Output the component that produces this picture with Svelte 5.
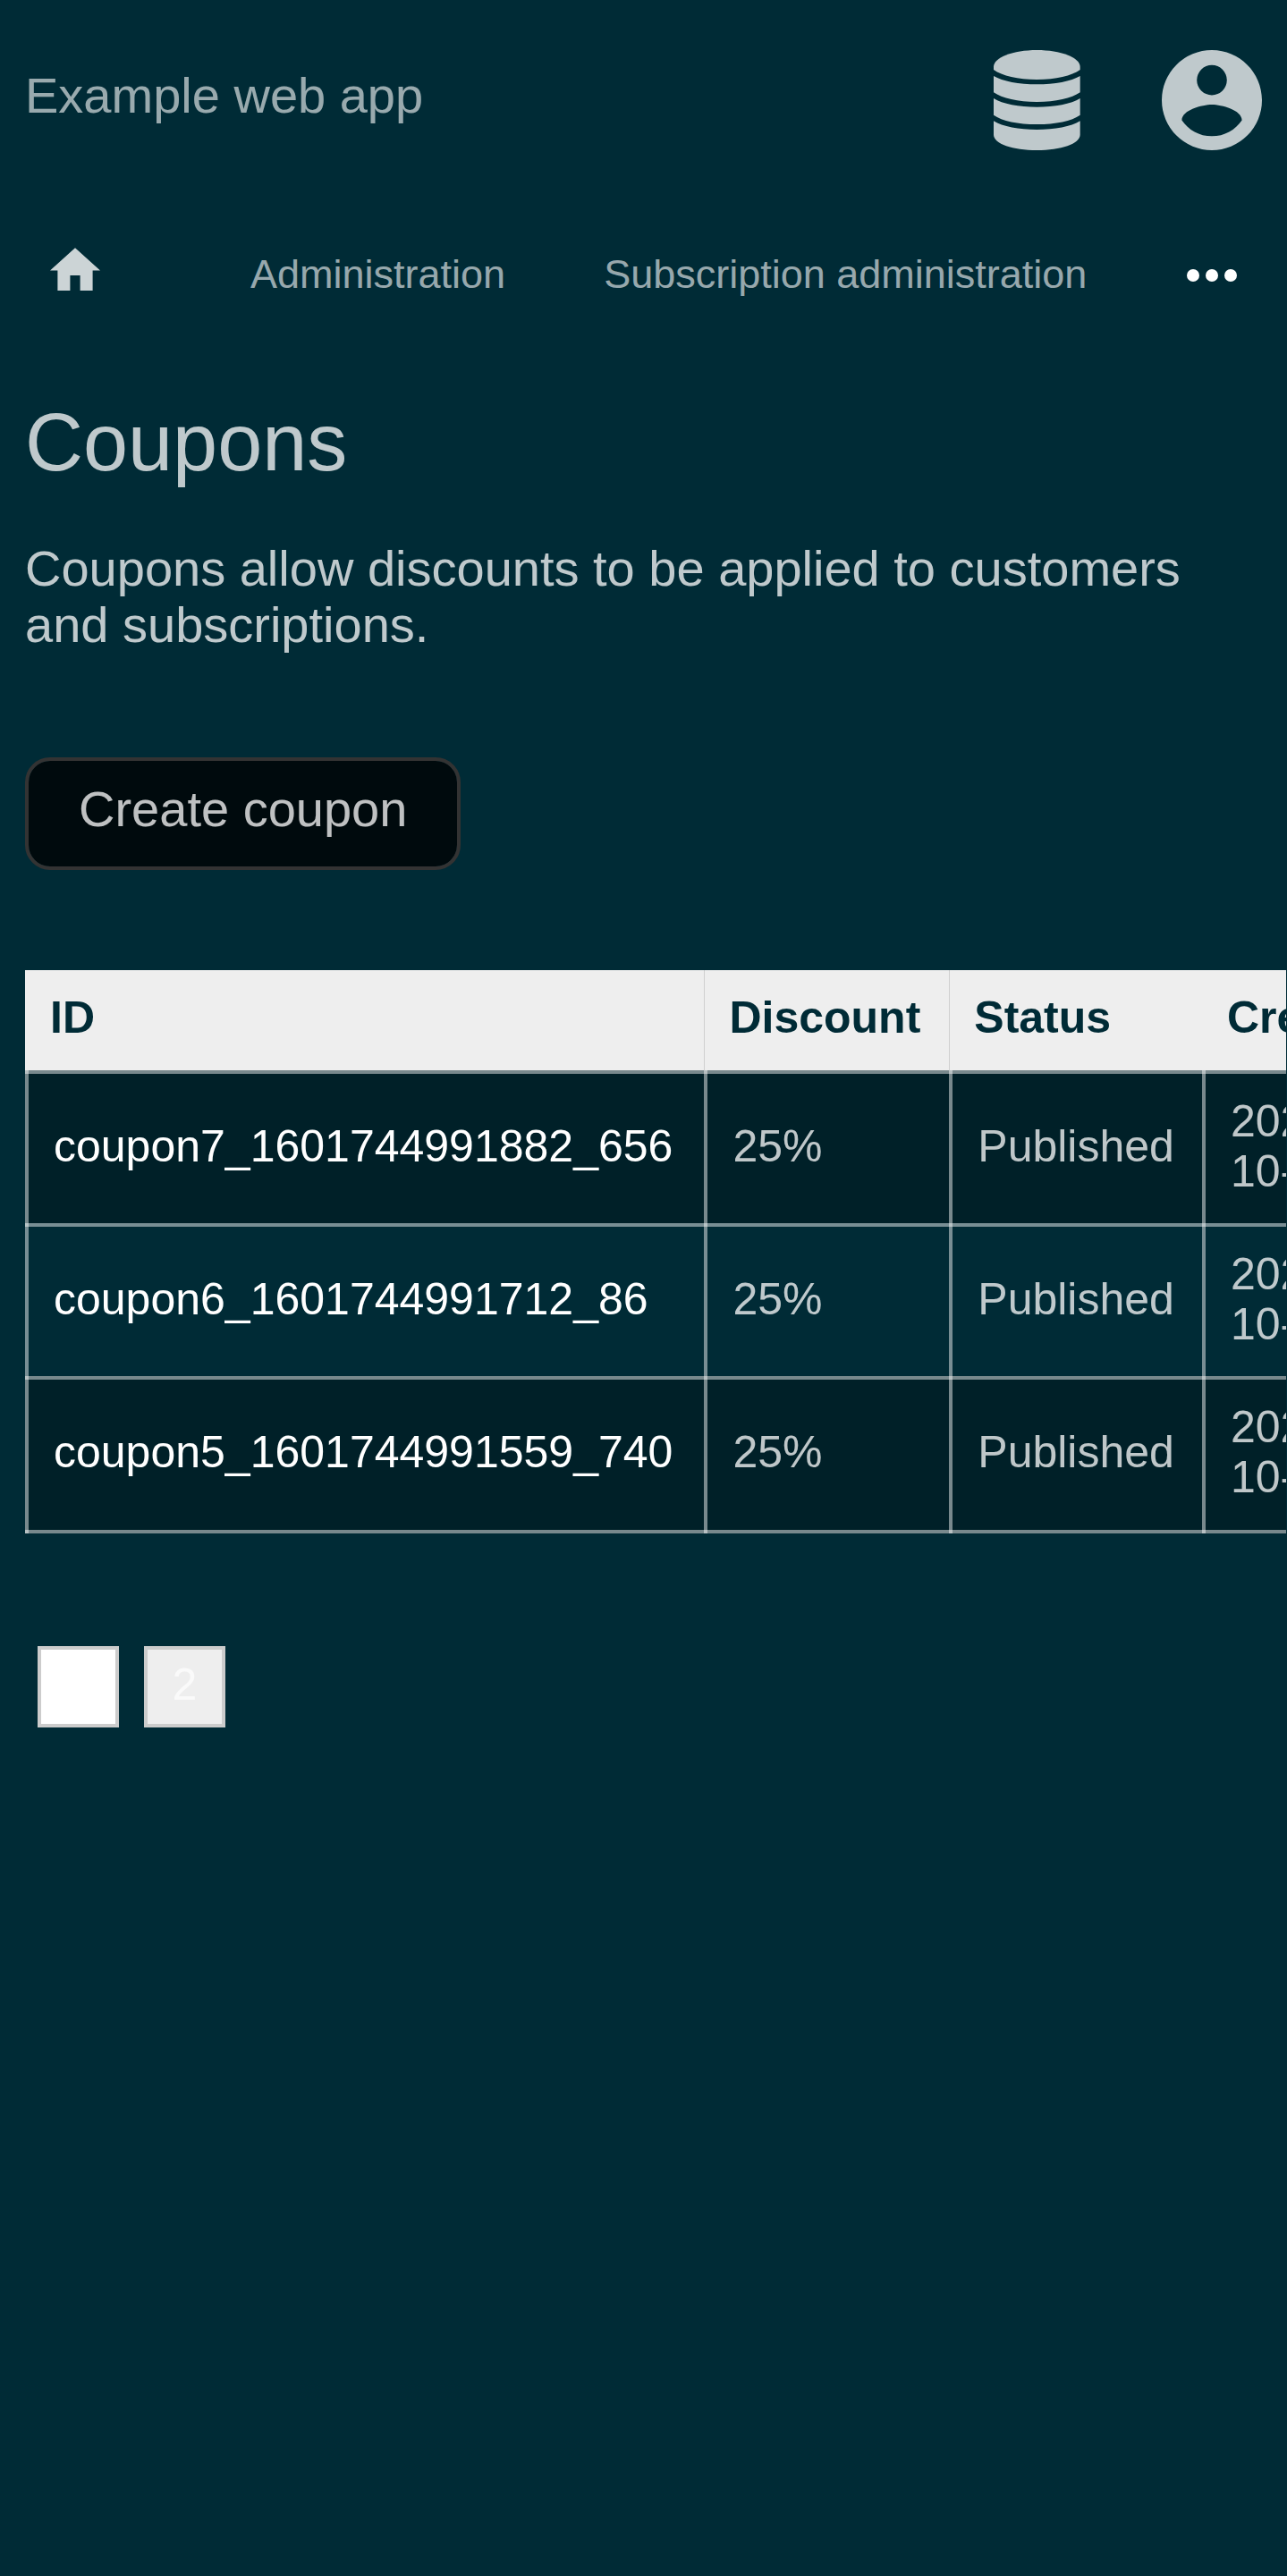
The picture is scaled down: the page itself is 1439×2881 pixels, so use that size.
<script>
  const columns = ['ID', 'Discount', 'Status', 'Created'];
  const coupons = [
    { id: 'coupon7_1601744991882_656', discount: '25%', status: 'Published', created: '2020-10-03' },
    { id: 'coupon6_1601744991712_86', discount: '25%', status: 'Published', created: '2020-10-03' },
    { id: 'coupon5_1601744991559_740', discount: '25%', status: 'Published', created: '2020-10-03' }
  ];
  const pages = [1, 2];
  const currentPage = 1;
</script>

<header class="topbar">
  <a class="brand" href="#home">Example web app</a>
  <div class="actions">
    <button class="icon-button" aria-label="Administrator menu">
      <svg class="database" viewBox="0 0 290 336" aria-hidden="true">
        <path d="M0 56C0 25 65 0 145 0S290 25 290 56V66C262 86 208 99 145 99S28 86 0 66Z" />
        <path d="M0 87C30 105 85 115 145 115S260 105 290 87V142C262 162 208 174 145 174S28 162 0 142Z" />
        <path d="M0 162C30 181 85 191 145 191S260 181 290 162V218C262 238 208 249 145 249S28 238 0 218Z" />
        <path d="M0 238C30 257 85 267 145 267S260 257 290 238V284C290 314 225 336 145 336S0 314 0 284Z" />
      </svg>
    </button>
    <button class="icon-button" aria-label="Account menu">
      <svg class="account" viewBox="2 2 20 20" aria-hidden="true">
        <path d="M12,19.2C9.5,19.2 7.29,17.92 6,16C6.03,14 10,12.9 12,12.9C14,12.9 17.97,14 18,16C16.71,17.92 14.5,19.2 12,19.2M12,5A3,3 0 0,1 15,8A3,3 0 0,1 12,11A3,3 0 0,1 9,8A3,3 0 0,1 12,5M12,2A10,10 0 0,0 2,12A10,10 0 0,0 12,22A10,10 0 0,0 22,12C22,6.47 17.5,2 12,2Z" />
      </svg>
    </button>
  </div>
</header>

<nav class="navbar" aria-label="Main">
  <a class="nav-item home" href="#home" aria-label="Home">
    <svg viewBox="2 3.6 20 20" aria-hidden="true"><path d="M10 20v-6h4v6h5v-8h3L12 3 2 12h3v8z" /></svg>
  </a>
  <a class="nav-item" href="#administration">Administration</a>
  <a class="nav-item" href="#subscriptions">Subscription administration</a>
  <button class="nav-item more" aria-label="More">
    <svg viewBox="0 0 56 56" aria-hidden="true">
      <circle cx="7" cy="29" r="7" /><circle cx="28" cy="29" r="7" /><circle cx="49" cy="29" r="7" />
    </svg>
  </button>
</nav>

<main>
  <h1>Coupons</h1>
  <p>Coupons allow discounts to be applied to customers and subscriptions.</p>
  <button class="create">Create coupon</button>

  <div class="table-wrap">
    <table>
      <thead>
        <tr>
          {#each columns as column}
            <th scope="col">{column}</th>
          {/each}
        </tr>
      </thead>
      <tbody>
        {#each coupons as coupon}
          <tr>
            <td><a href="#{coupon.id}">{coupon.id}</a></td>
            <td>{coupon.discount}</td>
            <td>{coupon.status}</td>
            <td>{coupon.created}</td>
          </tr>
        {/each}
      </tbody>
    </table>
  </div>

  <ul class="pages" aria-label="Pages">
    {#each pages as page}
      <li><a class="page" class:current={page === currentPage} href="#page-{page}">{page}</a></li>
    {/each}
  </ul>
</main>

<style>
  :global(body) {
    background: #002b36;
    color: rgba(255, 255, 255, 0.75);
    font: 56px/63px "Liberation Sans", Arial, sans-serif;
    overflow-x: hidden;
  }

  a {
    color: inherit;
    text-decoration: none;
  }

  button {
    border: 0;
    background: none;
    color: inherit;
    font: inherit;
    cursor: pointer;
  }

  svg {
    display: block;
    fill: currentColor;
    overflow: visible;
  }

  .topbar {
    display: flex;
    align-items: center;
    justify-content: space-between;
    padding: 56px 28px;
  }

  .brand {
    padding-bottom: 11px;
    color: rgba(255, 255, 255, 0.6);
  }

  .actions {
    display: flex;
    gap: 84px;
  }

  .icon-button {
    display: flex;
    justify-content: center;
    width: 112px;
    height: 112px;
    padding: 0;
  }

  .database,
  .account {
    height: 112px;
  }

  .navbar {
    display: flex;
    align-items: center;
    padding: 55px 0 53px;
    color: rgba(255, 255, 255, 0.6);
    font-size: 45px;
    line-height: 56px;
    white-space: nowrap;
  }

  .nav-item {
    padding: 0 55px;
  }

  .nav-item svg {
    width: 56px;
    height: 56px;
  }

  .home {
    margin-right: 57px;
    padding: 0 56px;
    color: rgba(255, 255, 255, 0.8);
  }

  .more {
    margin-left: auto;
    padding: 0 56px;
    color: #fff;
  }

  main {
    padding: 51px 28px;
  }

  h1 {
    margin: 0 0 53px;
    font-size: 90px;
    font-weight: 400;
    line-height: 112px;
  }

  p {
    margin: 0 0 117px;
  }

  .create {
    display: block;
    padding: 22px 56px 33px;
    border: 4px solid #333;
    border-radius: 28px;
    background: rgba(0, 0, 0, 0.75);
    background-clip: padding-box;
  }

  .table-wrap {
    margin: 112px -27px 126px 0;
    overflow: hidden;
  }

  table {
    --line: rgba(255, 255, 255, 0.47);
    border-spacing: 0;
    font-size: 50px;
    line-height: 56px;
  }

  th {
    padding: 25px 32px 31px 28px;
    background: #eee;
    color: #002b36;
    text-align: left;
  }

  th:nth-child(2),
  th:nth-child(3) {
    box-shadow: inset 1px 0 #d0d0d0;
  }

  /* Grid lines are translucent and cross each other, so joints look brighter. */
  td {
    padding: 29px 31px 30px 32px;
    box-shadow: inset 4px 0 var(--line), inset 0 4px var(--line);
  }

  td:first-child {
    padding-right: 35px;
  }

  tr:last-child td {
    padding-bottom: 35px;
    box-shadow: inset 4px 0 var(--line), inset 0 4px var(--line), inset 0 -4px var(--line);
  }

  td a {
    color: #fff;
  }

  tbody tr:nth-child(odd) {
    background: rgba(0, 0, 0, 0.25);
  }

  .pages {
    display: flex;
    gap: 28px;
    margin: 0;
    padding: 0 14px;
    list-style: none;
  }

  .page {
    display: block;
    box-sizing: border-box;
    width: 91px;
    height: 91px;
    padding: 11px 0;
    border: 4px solid #ccc;
    background: #eee;
    color: #fafafa;
    font-size: 50px;
    line-height: 56px;
    text-align: center;
  }

  .current {
    background: #fff;
    color: #fff;
  }
</style>
